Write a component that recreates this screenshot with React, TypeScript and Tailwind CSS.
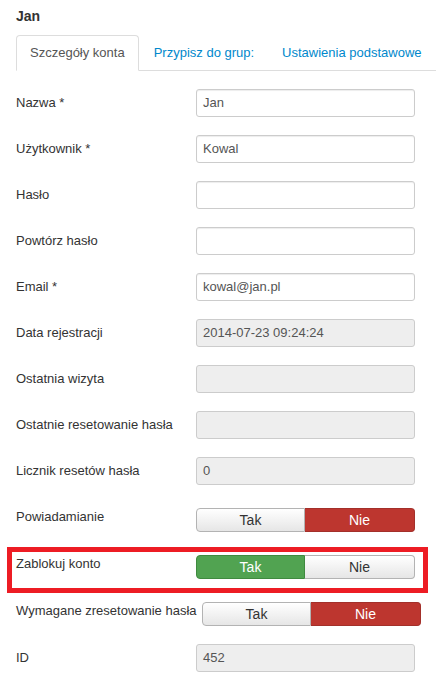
import React from 'react';

interface Field {
    label: string;
    value?: string;
    disabled?: boolean;
}

const fields: Field[] = [
    {label: 'Nazwa *', value: 'Jan'},
    {label: 'Użytkownik *', value: 'Kowal'},
    {label: 'Hasło'},
    {label: 'Powtórz hasło'},
    {label: 'Email *', value: 'kowal@jan.pl'},
    {label: 'Data rejestracji', value: '2014-07-23 09:24:24', disabled: true},
    {label: 'Ostatnia wizyta', disabled: true},
    {label: 'Ostatnie resetowanie hasła', disabled: true},
    {label: 'Licznik resetów hasła', value: '0', disabled: true},
];

const TextRow = ({label, value, disabled}: Field) => (
    <div className="flex mb-[18px]">
        <div className="w-[180px] shrink-0 pt-[5px] leading-[18px]">{label}</div>
        <div
            className={`w-[219px] h-[28px] border border-[#cccccc] rounded-[3px] px-[6px] leading-[26px] text-[#555555] ${
                disabled ? 'bg-[#eeeeee]' : 'bg-white shadow-[inset_0_1px_1px_rgba(0,0,0,0.075)]'
            }`}
        >
            {value}
        </div>
    </div>
);

const Toggle = ({yes}: { yes: boolean }) => (
    <div className="flex w-[219px] h-[24px] text-[14px] leading-[22px]">
        <div
            className={`w-[109px] text-center rounded-l-[4px] border ${
                yes
                    ? 'bg-[#51a351] border-[#3f8a3f] text-white'
                    : 'bg-gradient-to-b from-white to-[#e6e6e6] border-[#b3b3b3] text-[#333333]'
            }`}
        >
            Tak
        </div>
        <div
            className={`flex-1 text-center rounded-r-[4px] border border-l-0 ${
                yes
                    ? 'bg-gradient-to-b from-white to-[#e6e6e6] border-[#b3b3b3] text-[#333333]'
                    : 'bg-[#bd362f] border-[#a3302a] text-white'
            }`}
        >
            Nie
        </div>
    </div>
);

const App = () => {
    return (
        <div className="w-[436px] h-[676px] overflow-hidden bg-white text-[13px] text-[#333333] font-['Liberation_Sans',Arial,sans-serif]">
            <div className="pl-[16px] pt-[6px] text-[14px] leading-[20px] font-bold">Jan</div>

            {/* tabs */}
            <div className="ml-[16px] mt-[9px] flex border-b border-[#dddddd] leading-[18px]">
                <div className="px-[13px] pt-[8px] pb-[8px] border border-[#dddddd] border-b-white -mb-px rounded-t-[4px] bg-white text-[#555555]">
                    Szczegóły konta
                </div>
                <div className="ml-[2px] px-[13px] pt-[9px] pb-[8px] text-[#0088cc]">Przypisz do grup:</div>
                <div className="ml-[2px] px-[13px] pt-[9px] pb-[8px] text-[#0088cc]">Ustawienia podstawowe</div>
            </div>

            <div className="pl-[16px] pt-[18px]">
                {fields.map((f) => (
                    <TextRow key={f.label} {...f}/>
                ))}

                <div className="flex h-[29px] mb-[18px]">
                    <div className="w-[180px] shrink-0 pt-[5px] leading-[18px]">Powiadamianie</div>
                    <div className="pt-[5px]"><Toggle yes={false}/></div>
                </div>

                <div className="relative flex h-[29px] mb-[18px]">
                    <div className="w-[180px] shrink-0 pt-[5px] leading-[18px]">Zablokuj konto</div>
                    <div className="pt-[5px]"><Toggle yes={true}/></div>
                    {/* highlight frame */}
                    <div className="absolute -top-[3px] -bottom-[14px] -left-[9px] right-[8px] border-[5px] border-[#ed1c24]"/>
                </div>

                <div className="flex h-[29px] mb-[18px]">
                    <div className="w-[186px] shrink-0 pt-[5px] leading-[18px] whitespace-nowrap">Wymagane zresetowanie hasła</div>
                    <div className="pt-[5px]"><Toggle yes={false}/></div>
                </div>

                <TextRow label="ID" value="452" disabled/>
            </div>
        </div>
    );
};

export default App;
